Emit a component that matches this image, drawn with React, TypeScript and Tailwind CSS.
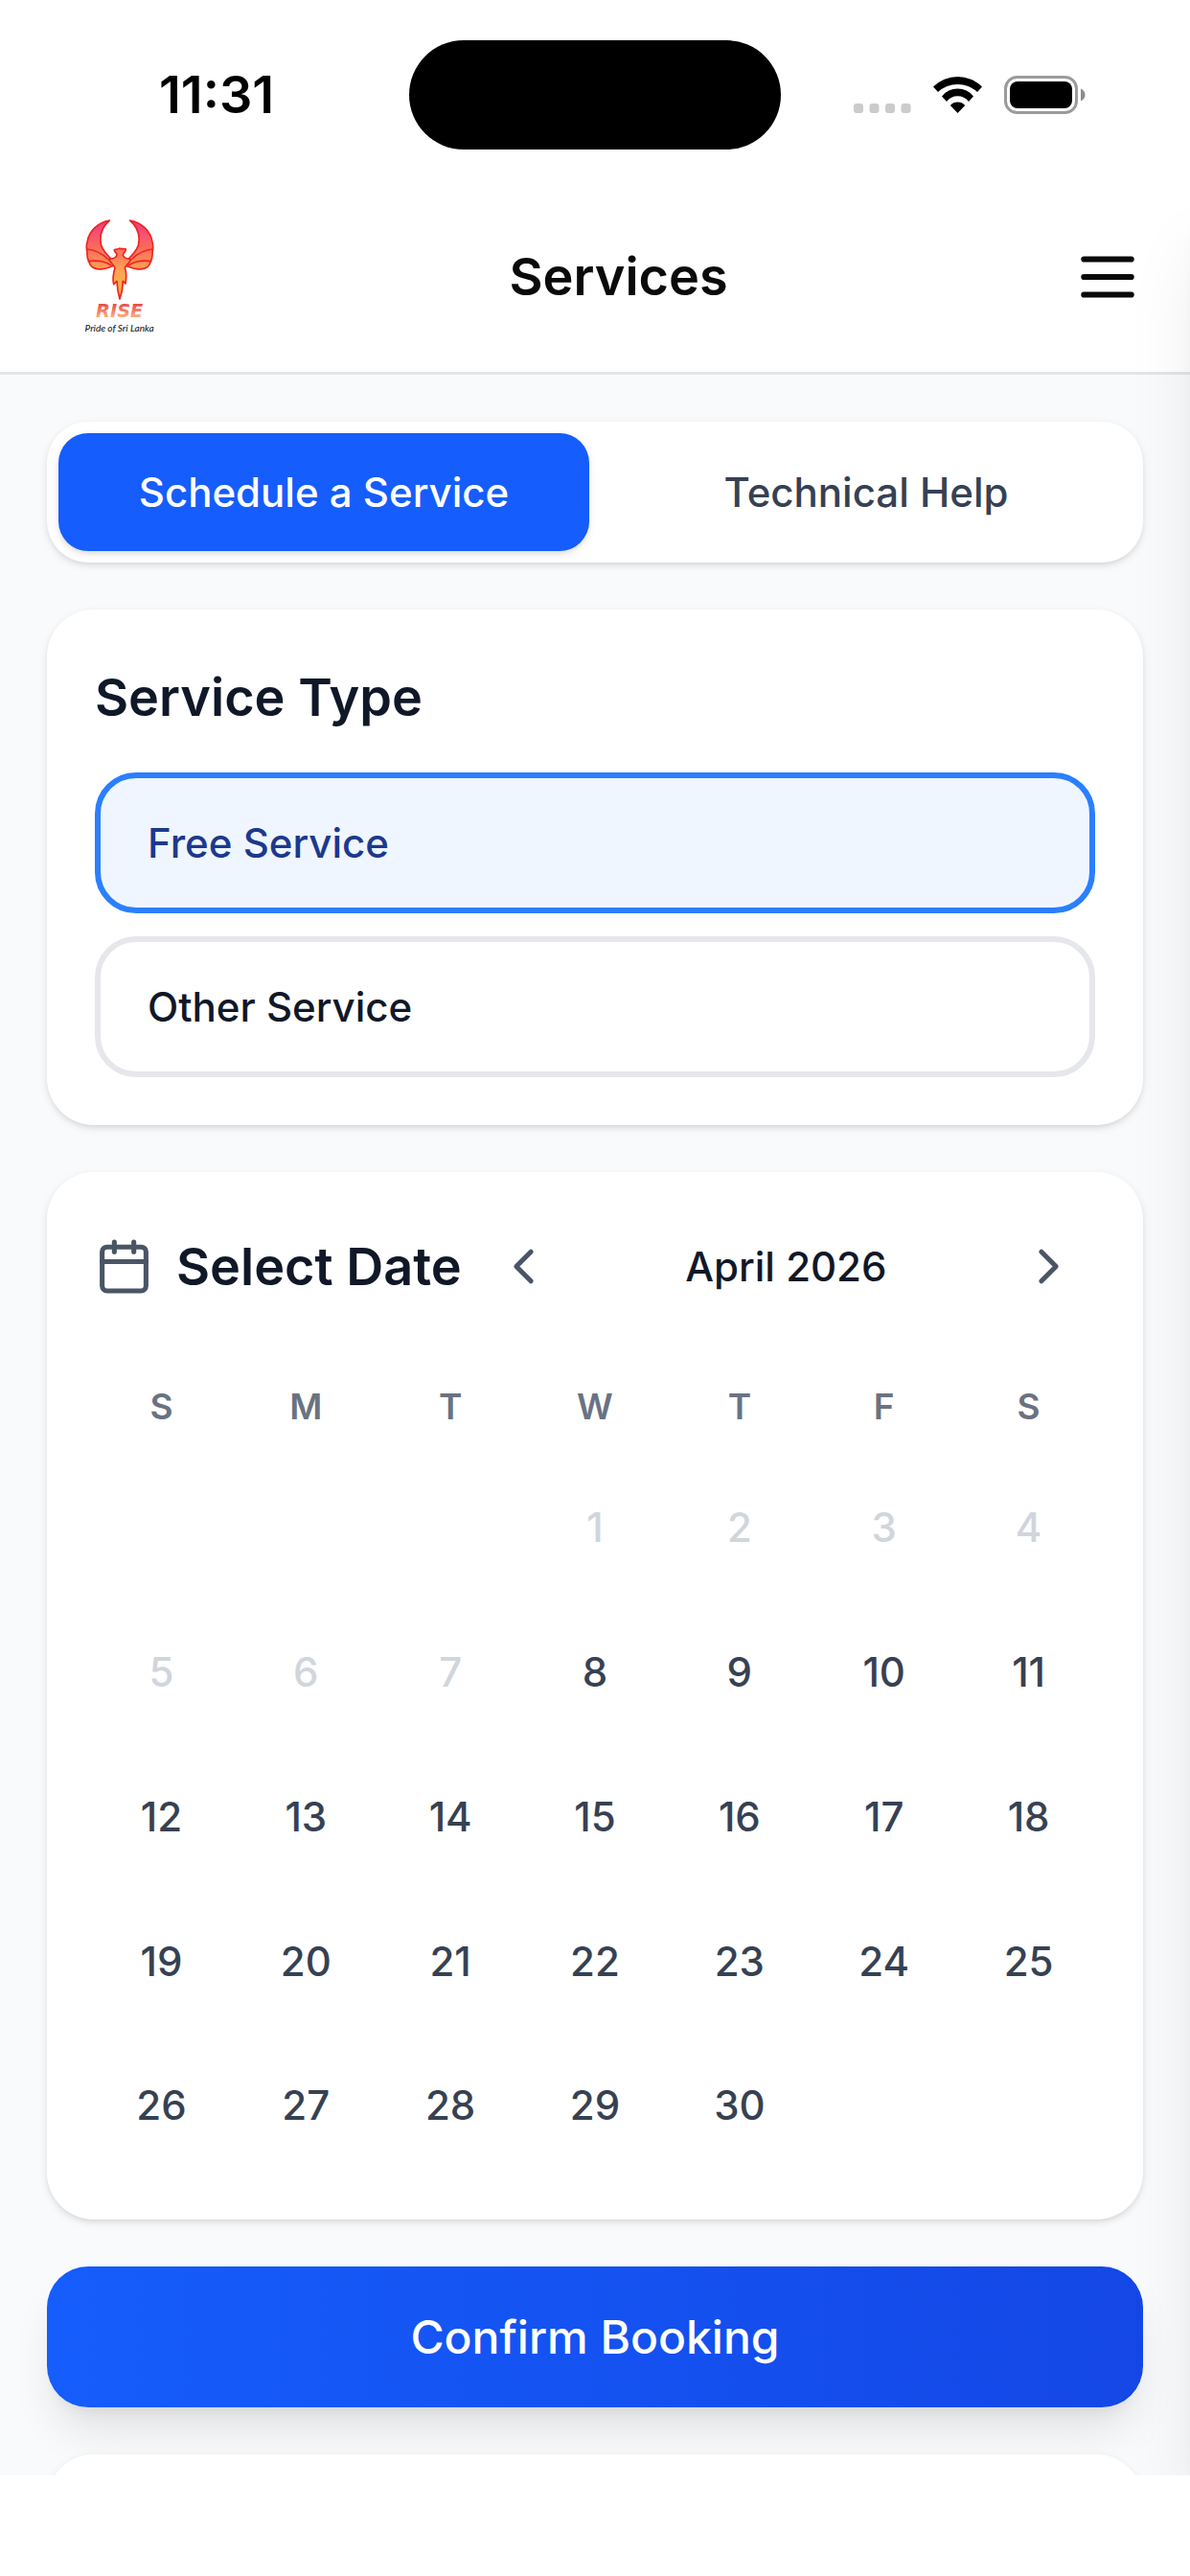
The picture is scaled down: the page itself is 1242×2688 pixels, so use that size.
import React, { useState } from "react";
import { Calendar, ChevronLeft, ChevronRight } from "lucide-react";

const WEEKDAYS = ["S", "M", "T", "W", "T", "F", "S"];
const LEADING_BLANKS = 3;
const DAYS_IN_MONTH = 30;
const FIRST_AVAILABLE_DAY = 8;

const cardClass =
  "bg-white rounded-[49px] shadow-[0_3px_9px_rgba(0,0,0,0.1),0_3px_6px_-3px_rgba(0,0,0,0.1)]";

const StatusBar = () => (
  <div className="h-[190px] shrink-0 pt-[42px] bg-white">
    <div className="grid grid-cols-[1fr_auto_1fr] items-center">
      <span className="pl-[166px] text-[54px] leading-[60px] font-semibold text-black">11:31</span>
      <div className="w-[388px] h-[114px] rounded-full bg-black" />
      <div className="flex items-center justify-end gap-[23px] pr-[109px]">
        {/* Signal */}
        <svg width="60" height="40" viewBox="0 0 60 40" fill="#cbcbcb">
          <rect x="0" y="29" width="10" height="10" rx="3" />
          <rect x="16.5" y="29" width="10" height="10" rx="3" />
          <rect x="33" y="29" width="10" height="10" rx="3" />
          <rect x="49.5" y="29" width="10" height="10" rx="3" />
        </svg>
        {/* Wifi */}
        <svg width="51" height="40" viewBox="0 -1 51 40" fill="#000">
          <path d="M0 10.5A36.2 36.2 0 0 1 51 10.5L46 16A30 30 0 0 0 5 16Z" />
          <path d="M9 20.5A21 21 0 0 1 42 20.5L37 26A14.5 14.5 0 0 0 14 26Z" />
          <path d="M17.8 30A10 10 0 0 1 33.2 30L25.5 38Z" />
        </svg>
        {/* Battery */}
        <svg width="85" height="40" viewBox="0 0 85 40">
          <rect x="1.5" y="1.5" width="74" height="37" rx="12" fill="none" stroke="#9b9b9b" strokeWidth="3" />
          <rect x="6" y="6" width="65" height="28" rx="8" fill="#000" />
          <path d="M80 13.5C83 15 84.5 17 84.5 20S83 25 80 26.5Z" fill="#8c8c8c" />
        </svg>
      </div>
    </div>
  </div>
);

const Wing = () => (
  <g>
    <path d="M163 60C128 66 98 92 93 128C89 142 91 152 93 160C92 172 94 182 99 190C103 208 122 215 142 212C154 211 164 206 173 203L178 190C160 174 143 158 137 138C130 108 140 80 163 60Z" />
    <path d="M93 150C112 152 138 162 156 180M97 188C120 184 148 188 168 200" fill="none" />
  </g>
);

const Logo = () => (
  <svg width="123" height="150" viewBox="-33 12 369 450" role="img" aria-label="Rise">
    <defs>
      <linearGradient id="bird" gradientUnits="userSpaceOnUse" x1="0" y1="60" x2="0" y2="305">
        <stop offset="0" stopColor="#ee3a86" />
        <stop offset="0.35" stopColor="#fb6a5c" />
        <stop offset="0.65" stopColor="#fda653" />
        <stop offset="1" stopColor="#fbb040" />
      </linearGradient>
      <linearGradient id="wordmark" x1="0" y1="0" x2="0" y2="1">
        <stop offset="0.2" stopColor="#ea4a45" />
        <stop offset="0.8" stopColor="#fbb080" />
      </linearGradient>
    </defs>
    <g fill="url(#bird)" stroke="#f0231f" strokeWidth="5" strokeLinejoin="round" strokeLinecap="round">
      <Wing />
      <g transform="translate(390 0) scale(-1 1)">
        <Wing />
      </g>
      <path d="M178 152C184 148 190 152 195 147C200 152 208 146 214 150C214 158 207 161 205 168C206 176 216 180 230 182C226 192 216 198 211 208C216 222 216 240 213 258L205 250L202 280L195 306L189 280L186 250L176 260C171 240 176 222 180 208C175 198 166 190 160 182C174 180 185 177 186 168C185 160 178 160 178 152Z" />
    </g>
    <text
      x="194"
      y="362"
      textAnchor="middle"
      fill="url(#wordmark)"
      className="font-['DejaVu_Sans',sans-serif] text-[58px] font-bold italic"
    >
      RISE
    </text>
    <text
      x="194"
      y="408"
      textAnchor="middle"
      fill="#222"
      className="font-['Lato',sans-serif] text-[30px] font-medium italic"
    >
      Pride of Sri Lanka
    </text>
  </svg>
);

const App = () => {
  const [tab, setTab] = useState("schedule");
  const [serviceType, setServiceType] = useState("free");

  const tabClass = (active: boolean) =>
    `flex-1 py-[31px] rounded-[31px] text-[42px] leading-[61px] font-medium ${
      active
        ? "bg-[#155dfc] text-white shadow-[0_3px_9px_rgba(0,0,0,0.1),0_3px_6px_-3px_rgba(0,0,0,0.1)]"
        : "text-[#364153]"
    }`;

  const optionClass = (active: boolean) =>
    `w-full px-[49px] py-[37px] rounded-[43px] border-6 text-left text-[42px] leading-[61px] font-medium ${
      active ? "border-[#2b7fff] bg-[#eff6ff] text-[#1c398e]" : "border-[#e5e7eb] bg-white text-[#101828]"
    }`;

  return (
    <div className="h-screen flex flex-col bg-white font-['Inter',sans-serif]">
      <StatusBar />

      <div className="relative flex-1 min-h-0 flex flex-col overflow-hidden">
        <header className="shrink-0 flex items-center justify-between px-[49px] py-6 bg-white border-b-3 border-[#e5e5e5]">
          <Logo />
          <h1 className="text-[54px] leading-[84px] font-semibold text-[#0a0a0a]">Services</h1>
          <button type="button" aria-label="Open menu">
            <svg width="74" height="74" viewBox="0 0 24 24" fill="none" stroke="#0a0a0a" strokeWidth="2" strokeLinecap="round">
              <path d="M4 6h16M4 12h16M4 18h16" />
            </svg>
          </button>
        </header>

        <main className="flex-1 min-h-0 overflow-y-auto [scrollbar-width:none] flex flex-col gap-[49px] p-[49px] bg-[#f9fafb]">
          {/* Tabs */}
          <div className="shrink-0 flex gap-3 p-3 bg-white rounded-[43px] shadow-[0_3px_9px_rgba(0,0,0,0.1),0_3px_6px_-3px_rgba(0,0,0,0.1)]">
            <button type="button" className={tabClass(tab === "schedule")} onClick={() => setTab("schedule")}>
              Schedule a Service
            </button>
            <button type="button" className={tabClass(tab === "help")} onClick={() => setTab("help")}>
              Technical Help
            </button>
          </div>

          {/* Service Type */}
          <section className={`shrink-0 p-[50px] ${cardClass}`}>
            <h2 className="mb-9 text-[54px] leading-[84px] font-semibold text-[#101828]">Service Type</h2>
            <div className="flex flex-col gap-6">
              <button type="button" className={optionClass(serviceType === "free")} onClick={() => setServiceType("free")}>
                Free Service
              </button>
              <button type="button" className={optionClass(serviceType === "other")} onClick={() => setServiceType("other")}>
                Other Service
              </button>
            </div>
          </section>

          {/* Select Date */}
          <section className={`shrink-0 p-[50px] ${cardClass}`}>
            <div className="flex items-center gap-4">
              <div className="flex items-center gap-6">
                <Calendar size={61} className="text-[#4a5565]" />
                <h2 className="text-[54px] leading-[84px] font-semibold text-[#101828]">Select Date</h2>
              </div>
              <div className="flex-1 flex items-center justify-between">
                <button type="button" aria-label="Previous month" className="p-[18px]">
                  <ChevronLeft size={61} className="text-[#4a5565]" />
                </button>
                <span className="text-[42px] leading-[61px] font-medium text-[#101828]">April 2026</span>
                <button type="button" aria-label="Next month" className="p-[18px]">
                  <ChevronRight size={61} className="text-[#4a5565]" />
                </button>
              </div>
            </div>

            <div className="mt-9 grid grid-cols-7 gap-x-3">
              {WEEKDAYS.map((day, i) => (
                <div key={i} className="pt-[37px] pb-8 text-center text-[37px] leading-[49px] font-semibold text-[#6a7282]">
                  {day}
                </div>
              ))}
            </div>

            <div className="grid grid-cols-7 gap-3">
              {Array.from({ length: LEADING_BLANKS }, (_, i) => (
                <div key={`blank-${i}`} />
              ))}
              {Array.from({ length: DAYS_IN_MONTH }, (_, i) => i + 1).map((day) => (
                <button
                  key={day}
                  type="button"
                  disabled={day < FIRST_AVAILABLE_DAY}
                  className="aspect-square rounded-[31px] text-[42px] leading-[61px] font-medium text-[#364153] disabled:text-[#d1d5dc]"
                >
                  {day}
                </button>
              ))}
            </div>
          </section>

          <button
            type="button"
            className="shrink-0 py-[37px] rounded-[43px] bg-linear-to-r from-[#155dfc] to-[#1447e6] text-[48px] leading-[73px] font-medium text-white shadow-[0_31px_46px_-9px_rgba(0,0,0,0.1),0_12px_18px_-12px_rgba(0,0,0,0.1)]"
          >
            Confirm Booking
          </button>

          <section className={`relative shrink-0 h-[300px] ${cardClass}`} />
        </main>

        {/* Closed menu drawer, only its shadow reaches the page */}
        <aside
          aria-hidden="true"
          className="absolute inset-y-0 left-full w-1/2 bg-white shadow-[0_61px_77px_-15px_rgba(0,0,0,0.1),0_25px_31px_-18px_rgba(0,0,0,0.1)]"
        />
      </div>

      <div className="h-[105px] shrink-0 bg-white" />
    </div>
  );
};

export default App;
